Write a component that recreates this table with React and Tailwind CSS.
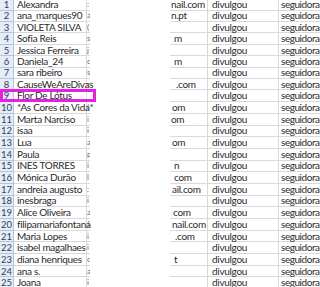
const rows = [
  { name: 'Alexandra', frag: ':', tail: 'nail.com', pl: 'pl-[1px]' },
  { name: 'ana_marques90', frag: 'a', tail: 'n.pt', pl: 'pl-[1px]' },
  { name: 'VIOLETA SILVA', frag: '(', tail: '', pl: '' },
  { name: 'Sofia Reis', frag: 's', tail: 'm', pl: 'pl-[4px]' },
  { name: 'Jessica Ferreira', frag: 'j', tail: '', pl: '' },
  { name: 'Daniela_24', frag: 'c', tail: 'm', pl: 'pl-[4px]' },
  { name: 'sara ribeiro', frag: 's', tail: '', pl: '' },
  { name: 'CauseWeAreDivas', frag: 'c', tail: '.com', pl: 'pl-[6px]' },
  { name: 'Flor De Lótus', frag: '', tail: '', pl: '' },
  { name: '*As Cores da Vida*', frag: '(', tail: 'om', pl: 'pl-[2px]' },
  { name: 'Marta Narciso', frag: 'i', tail: 'om', pl: 'pl-[1px]' },
  { name: 'isaa', frag: 'i', tail: '', pl: '' },
  { name: 'Lua', frag: 'a', tail: 'om', pl: 'pl-[2px]' },
  { name: 'Paula', frag: 'p', tail: '', pl: '' },
  { name: 'INES TORRES', frag: 'i', tail: 'n', pl: 'pl-[4px]' },
  { name: 'Mónica Durão', frag: 'l', tail: 'com', pl: 'pl-[4px]' },
  { name: 'andreia augusto', frag: ':', tail: 'ail.com', pl: 'pl-[2px]' },
  { name: 'inesbraga', frag: 'i', tail: '', pl: '' },
  { name: 'Alice Oliveira', frag: 'a', tail: 'com', pl: 'pl-[3px]' },
  { name: 'filipamariafontana', frag: 'f', tail: 'nail.com', pl: 'pl-[2px]' },
  { name: 'Maria Lopes', frag: 'i', tail: '.com', pl: 'pl-[5px]' },
  { name: 'isabel magalhaes', frag: 'i', tail: '', pl: '' },
  { name: 'diana henriques', frag: 'c', tail: 't', pl: 'pl-[4px]' },
  { name: 'ana s.', frag: 'a', tail: '', pl: '' },
  { name: 'Joana', frag: 'i', tail: '', pl: '' },
];

const App = () => {
  return (
    <div className="relative w-[320px] h-[287px] overflow-hidden bg-white font-['Lato',sans-serif] text-[10px] tracking-[-0.3px] text-[#2a2a2a]">
      <div className="flex flex-col -mt-[0.7px]">
        {rows.map((r, idx) => (
          <div key={idx} className={`flex leading-[11px] ${idx < 8 ? 'h-[11.4px]' : 'h-[11.7px]'}`}>
            {/* cabeçalho da linha */}
            <div className="w-[14px] shrink-0 flex items-center justify-center bg-[#e6edf6] border-r border-b border-[#b5c5d9] text-[9.5px] tracking-normal text-[#30405c]">
              {idx + 1}
            </div>
            <div className="w-[73px] shrink-0 pl-[3px] flex items-center border-r border-b border-[#d6d9dd] whitespace-nowrap">
              {r.name}
            </div>
            <div className="w-[3px] shrink-0 flex items-center border-b border-[#d6d9dd] overflow-hidden text-[#666] text-[8px]">
              {r.frag}
            </div>
            {/* área apagada */}
            <div className="w-[80px] shrink-0" />
            <div className={`w-[38px] shrink-0 flex items-center border-r border-b border-[#d6d9dd] whitespace-nowrap ${r.pl}`}>
              {r.tail}
            </div>
            <div className="w-[71px] shrink-0 pl-[4px] flex items-center border-r border-b border-[#d6d9dd]">
              divulgou
            </div>
            <div className="flex-1 pl-[2px] flex items-center border-b border-[#d6d9dd] whitespace-nowrap tracking-[-0.45px]">
              seguidora
            </div>
          </div>
        ))}
      </div>

      {/* marcação rosa */}
      <div className="absolute left-0 top-[89px] w-[96px] h-[13px] border-[3px] border-[#e61ee6]" />
    </div>
  );
};

export default App;
